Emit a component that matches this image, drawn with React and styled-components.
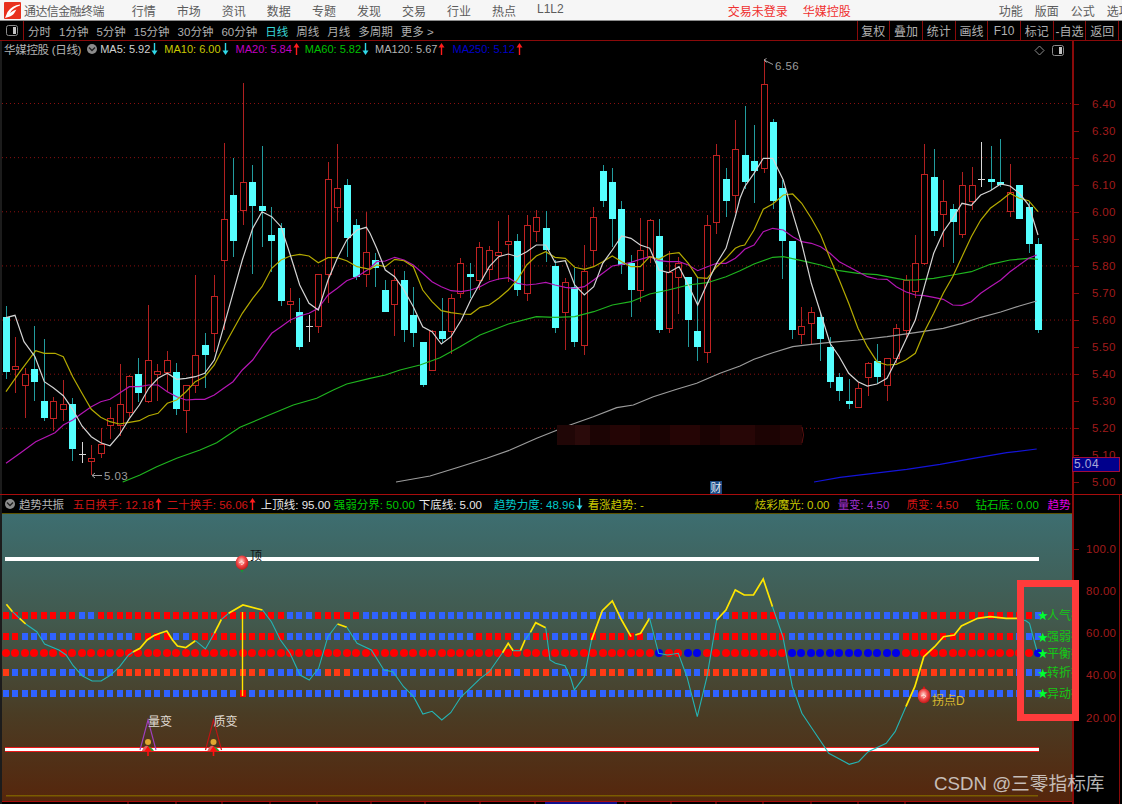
import React from "react";
import styled, { createGlobalStyle } from "styled-components";

const GlobalStyle = createGlobalStyle`
  html, body {
    margin: 0;
    padding: 0;
    background: #000;
  }
  body {
    font-family: "Liberation Sans", "Noto Sans CJK SC", sans-serif;
  }
`;

// ---- chart data, read off the reference (z = crop coordinates) ----
const upY = (z) => 130 + z / 3;
const candleX = (i) => Math.round(5.9 + 9.47 * i);

// [high, top, bottom, low, type] c = falling, r = rising, w = doji
const CANDLES = [
  [528, 562, 725, 748, "c"], [622, 708, 718, 790, "r"], [715, 732, 767, 863, "r"], [588, 717, 755, 812, "c"],
  [628, 813, 863, 872, "c"], [800, 813, 865, 903, "r"], [750, 822, 838, 872, "r"], [805, 822, 958, 992, "c"],
  [937, 973, 975, 1000, "w"], [945, 985, 993, 1035, "r"], [895, 942, 970, 985, "r"], [832, 865, 887, 928, "r"],
  [702, 822, 885, 918, "r"], [735, 740, 848, 862, "r"], [684, 731, 790, 815, "c"], [526, 692, 815, 818, "r"],
  [703, 725, 734, 812, "r"], [663, 692, 727, 785, "r"], [700, 725, 837, 855, "c"], [765, 765, 840, 910, "r"],
  [435, 675, 767, 790, "r"], [610, 644, 674, 773, "c"], [436, 498, 611, 665, "r"], [38, 269, 392, 600, "r"],
  [83, 195, 333, 382, "c"], [-141, 157, 240, 285, "r"], [105, 156, 229, 432, "c"], [48, 229, 244, 350, "c"],
  [230, 316, 333, 425, "c"], [278, 293, 514, 527, "c"], [475, 514, 524, 578, "r"], [505, 545, 652, 660, "c"],
  [555, 589, 590, 635, "w"], [433, 433, 590, 608, "r"], [95, 148, 433, 520, "r"], [43, 174, 232, 277, "r"],
  [148, 165, 325, 382, "c"], [268, 286, 440, 450, "c"], [245, 368, 434, 470, "r"], [368, 390, 415, 470, "c"],
  [450, 481, 545, 545, "c"], [418, 450, 524, 618, "r"], [423, 449, 601, 635, "c"], [470, 554, 610, 652, "c"],
  [635, 635, 765, 772, "c"], [600, 603, 720, 722, "r"], [505, 602, 627, 640, "c"], [492, 505, 603, 672, "r"],
  [385, 400, 490, 505, "r"], [400, 433, 441, 505, "c"], [337, 352, 451, 480, "r"], [348, 360, 418, 450, "r"],
  [272, 368, 377, 450, "r"], [255, 335, 344, 455, "r"], [312, 334, 480, 497, "c"], [255, 286, 490, 513, "r"],
  [240, 262, 304, 335, "r"], [244, 295, 360, 397, "c"], [390, 407, 593, 610, "c"], [445, 456, 548, 660, "r"],
  [415, 472, 635, 652, "c"], [345, 424, 646, 675, "r"], [232, 262, 361, 410, "r"], [105, 122, 212, 230, "c"],
  [113, 156, 268, 350, "c"], [212, 238, 405, 432, "c"], [375, 400, 480, 562, "c"], [263, 360, 482, 515, "r"],
  [268, 270, 380, 400, "r"], [268, 318, 601, 610, "c"], [362, 428, 595, 610, "r"], [380, 400, 443, 553, "r"],
  [440, 441, 570, 652, "c"], [440, 602, 651, 692, "c"], [255, 287, 668, 700, "r"], [43, 76, 278, 312, "r"],
  [114, 148, 212, 262, "c"], [-30, 58, 197, 250, "r"], [-72, 75, 155, 178, "c"], [-15, 92, 122, 220, "c"],
  [-213, -137, 116, 130, "r"], [-33, -24, 212, 237, "c"], [150, 173, 333, 448, "c"], [333, 333, 601, 627, "c"],
  [530, 588, 612, 643, "r"], [532, 546, 581, 643, "r"], [545, 562, 627, 692, "c"], [620, 652, 756, 773, "c"],
  [730, 740, 782, 812, "c"], [748, 814, 821, 838, "c"], [755, 775, 832, 835, "r"], [695, 700, 741, 797, "r"],
  [643, 692, 740, 760, "c"], [684, 684, 767, 812, "r"], [582, 594, 684, 700, "r"], [435, 450, 600, 625, "r"],
  [315, 400, 483, 505, "r"], [43, 132, 400, 405, "r"], [58, 140, 302, 318, "c"], [150, 214, 253, 350, "r"],
  [222, 238, 277, 398, "c"], [125, 166, 314, 325, "r"], [110, 166, 215, 240, "r"], [35, 147, 149, 172, "w"],
  [48, 148, 155, 180, "c"], [27, 157, 163, 172, "c"], [103, 187, 245, 260, "r"], [165, 165, 268, 268, "c"],
  [215, 230, 342, 368, "c"], [325, 343, 601, 610, "c"],
];

// moving averages, three crops of the upper pane
const crop = (x0, sx, y0) => (pts) => pts.map(([x, y]) => [x0 + x / sx, y0 + y / 3]);
const A = crop(0, 3, 130);
const B = crop(370, 3, 130);
const C = crop(740, 3, 130);

const MA_LINES = [
  {
    color: "#1fb41f",
    pts: [
      ...A([[368, 1056], [420, 1035], [470, 1010], [530, 985], [600, 960], [650, 938], [720, 892], [800, 858], [880, 825], [950, 805], [1000, 780], [1040, 762], [1110, 745]]),
      ...B([[46, 735], [90, 720], [150, 705], [210, 683], [270, 650], [330, 615], [415, 582], [499, 560], [555, 562], [614, 560], [671, 545], [727, 525], [783, 515], [839, 492], [895, 480], [955, 465], [1012, 458], [1068, 440], [1110, 422]]),
      ...C([[42, 402], [98, 382], [130, 380], [185, 392], [242, 405], [298, 422], [354, 430], [411, 434], [469, 445], [497, 450], [526, 450], [581, 445], [638, 435], [694, 425], [751, 403], [810, 390], [866, 385], [894, 388]]),
    ],
  },
  {
    color: "#9c9c9c",
    pts: [
      ...B([[78, 1056], [180, 1038], [270, 1010], [350, 985], [420, 960], [500, 925], [600, 885], [670, 860], [740, 833], [790, 825], [850, 800], [920, 778], [980, 760], [1050, 730], [1110, 708]]),
      ...C([[42, 688], [98, 668], [158, 650], [214, 643], [270, 637], [354, 630], [441, 620], [526, 608], [610, 595], [666, 580], [722, 562], [782, 546], [838, 528], [890, 513]]),
    ],
  },
  {
    color: "#1414d8",
    pts: C([[222, 1056], [300, 1042], [400, 1030], [500, 1018], [600, 1003], [700, 985], [800, 968], [890, 957]]),
  },
  {
    color: "#b416b4",
    pts: [
      ...A([[18, 1000], [60, 970], [107, 935], [165, 908], [190, 885], [218, 870], [246, 850], [274, 830], [302, 815], [330, 808], [358, 790], [388, 770], [418, 770], [446, 765], [474, 765], [502, 785], [530, 800], [558, 810], [586, 808], [614, 808], [643, 795], [671, 775], [699, 755], [727, 720], [758, 690], [786, 650], [815, 610], [843, 590], [871, 570], [899, 558], [927, 550], [955, 535], [984, 495], [1012, 475], [1040, 452], [1071, 440], [1110, 415]]),
      ...B([[20, 395], [46, 393], [74, 382], [102, 390], [130, 405], [158, 430], [186, 455], [214, 470], [243, 482], [274, 485], [302, 480], [330, 470], [358, 455], [386, 447], [415, 443], [442, 460], [470, 465], [499, 462], [527, 457], [555, 465], [586, 472], [614, 475], [643, 470], [671, 450], [698, 430], [727, 408], [755, 403], [783, 397], [811, 388], [839, 380], [867, 392], [895, 395], [927, 395], [955, 405], [983, 422], [1012, 410], [1040, 400], [1068, 400], [1096, 385], [1110, 372]]),
      ...C([[14, 358], [42, 345], [70, 305], [98, 295], [130, 300], [158, 320], [185, 335], [214, 340], [242, 350], [270, 370], [298, 395], [326, 410], [354, 425], [382, 440], [411, 447], [441, 448], [469, 470], [497, 485], [526, 495], [553, 497], [581, 502], [610, 508], [638, 525], [666, 526], [694, 515], [722, 490], [751, 470], [782, 450], [810, 425], [838, 405], [866, 385], [890, 375]]),
    ],
  },
  {
    color: "#b4aa00",
    pts: [
      ...A([[18, 785], [60, 725], [107, 662], [133, 670], [165, 670], [190, 680], [218, 740], [246, 790], [274, 838], [302, 862], [330, 875], [358, 882], [388, 877], [418, 872], [446, 857], [474, 850], [502, 820], [530, 810], [558, 785], [586, 755], [614, 740], [643, 705], [671, 650], [699, 600], [727, 550], [758, 505], [786, 470], [815, 415], [843, 390], [871, 378], [899, 373], [927, 378], [955, 398], [984, 383], [1012, 383], [1040, 392], [1071, 410], [1110, 418]]),
      ...B([[20, 405], [46, 410], [74, 388], [102, 392], [130, 410], [158, 480], [186, 515], [214, 542], [243, 548], [274, 552], [302, 553], [330, 532], [358, 525], [386, 505], [415, 480], [442, 450], [470, 405], [499, 378], [527, 365], [555, 382], [586, 385], [614, 412], [643, 418], [671, 410], [698, 395], [727, 378], [755, 395], [783, 410], [811, 410], [839, 380], [867, 388], [895, 372], [927, 368], [955, 400], [983, 443], [1012, 445], [1040, 410], [1068, 385], [1096, 355], [1110, 348]]),
      ...C([[14, 345], [42, 300], [70, 238], [98, 222], [130, 195], [158, 192], [185, 220], [214, 265], [242, 315], [270, 385], [298, 450], [326, 520], [354, 595], [382, 650], [411, 695], [441, 705], [469, 703], [497, 690], [526, 670], [553, 605], [581, 550], [610, 490], [638, 440], [666, 380], [694, 320], [722, 270], [751, 235], [782, 212], [810, 190], [838, 205], [866, 212], [894, 245]]),
    ],
  },
  {
    color: "#d4d4d4",
    pts: [
      ...A([[18, 563], [45, 556], [72, 635], [105, 680], [133, 755], [160, 773], [190, 797], [218, 838], [246, 888], [274, 920], [302, 938], [330, 947], [358, 915], [388, 866], [418, 825], [446, 775], [474, 745], [502, 730], [530, 748], [558, 745], [586, 740], [614, 730], [643, 690], [671, 590], [699, 490], [727, 390], [758, 295], [786, 245], [815, 260], [843, 290], [871, 375], [899, 465], [927, 520], [955, 540], [984, 450], [1012, 385], [1040, 330], [1071, 300], [1099, 292], [1110, 310]]),
      ...B([[20, 355], [46, 420], [74, 440], [102, 480], [130, 530], [158, 590], [186, 605], [214, 642], [243, 620], [274, 570], [302, 510], [330, 460], [358, 410], [386, 380], [415, 372], [442, 380], [470, 365], [499, 345], [527, 345], [555, 397], [586, 392], [614, 465], [643, 495], [671, 470], [698, 400], [727, 360], [755, 318], [783, 325], [811, 345], [839, 355], [867, 420], [895, 428], [927, 410], [955, 465], [983, 525], [1012, 460], [1040, 400], [1068, 355], [1096, 260], [1110, 205]]),
      ...C([[14, 170], [42, 130], [70, 85], [98, 85], [130, 150], [158, 250], [185, 340], [214, 460], [242, 550], [270, 640], [298, 680], [326, 730], [354, 755], [382, 768], [411, 762], [441, 745], [469, 690], [497, 630], [526, 570], [553, 470], [581, 370], [610, 305], [638, 265], [666, 220], [694, 226], [722, 195], [751, 182], [782, 162], [810, 168], [838, 190], [866, 225], [894, 315]]),
    ],
  },
];

const GRID_PRICES = [6.4, 6.2, 6.0, 5.8, 5.6, 5.4, 5.2];
const PRICE_LABELS = [6.4, 6.3, 6.2, 6.1, 6.0, 5.9, 5.8, 5.7, 5.6, 5.5, 5.4, 5.3, 5.2, 5.1, 5.0];
const priceY = (p) => 103.5 + (6.4 - p) * 270.7;

const MOSAIC = [
  [557, 18, "#200606"], [575, 15, "#2a0a0a"], [590, 20, "#1c0404"], [610, 30, "#240505"], [640, 30, "#1a0303"],
  [670, 30, "#250505"], [700, 20, "#1a0303"], [720, 35, "#270606"], [755, 25, "#1c0303"], [780, 22, "#220505"],
];

// lower pane: signal rows, runs of red as [from, to]
const inRuns = (i, runs) => runs.some(([a, b]) => i >= a && i <= b);
const ROWS = [
  { y: 612, on: "#ff0000", runs: [[0, 7], [10, 29], [33, 37], [77, 81], [97, 108]] },
  { y: 633, on: "#ff0000", runs: [[0, 1], [14, 17], [20, 29], [50, 53], [56, 57], [62, 67], [75, 82], [95, 106]] },
  { y: 669, on: "#ff3a14", runs: [[0, 0], [12, 27], [34, 36], [48, 53], [55, 57], [62, 65], [67, 68], [71, 71], [74, 80], [94, 106]] },
  { y: 690, on: "#ff0000", runs: [[25, 25]] },
];
const DOT_BLUE = [[69, 69], [72, 73], [83, 94], [109, 109]];

const Z6 = crop(0, 2.8, 490);
const Z7 = crop(560, 2.79, 490);
const TREND = [
  ["y", Z6([[18, 343], [35, 365]])],
  ["c", Z6([[35, 365], [55, 385]])],
  ["y", Z6([[55, 385], [72, 402]])],
  ["c", Z6([[72, 402], [103, 425], [125, 462], [165, 480], [185, 495], [205, 527], [230, 557], [258, 573], [283, 573], [310, 555], [335, 530], [360, 495], [372, 486]])],
  ["y", Z6([[372, 486], [392, 475], [412, 450], [430, 437], [448, 430], [467, 423], [483, 450], [497, 468], [520, 473], [547, 452]])],
  ["c", Z6([[547, 452], [575, 477], [600, 430]])],
  ["y", Z6([[600, 430], [620, 388]])],
  ["c", Z6([[620, 388], [640, 370]])],
  ["y", Z6([[640, 370], [680, 345], [735, 360]])],
  ["c", Z6([[735, 360], [760, 395], [785, 450], [812, 490], [840, 555], [866, 570], [892, 535], [918, 440], [945, 402]])],
  ["y", Z6([[945, 402], [971, 412]])],
  ["c", Z6([[971, 412], [1000, 460], [1040, 480], [1075, 540], [1100, 545], [1130, 590], [1158, 620], [1184, 672], [1210, 664], [1237, 690], [1262, 668], [1290, 622], [1345, 565], [1370, 545], [1407, 488]])],
  ["y", Z6([[1407, 488], [1423, 460], [1437, 482]])],
  ["c", Z6([[1437, 482], [1457, 482]])],
  ["y", Z6([[1457, 482], [1470, 450]])],
  ["c", Z6([[1470, 450], [1485, 427]])],
  ["y", Z6([[1485, 427], [1500, 398], [1528, 413]])],
  ["c", [...Z6([[1528, 413], [1540, 510], [1555, 520]]), ...Z7([[14, 527], [30, 565], [40, 600], [68, 560], [88, 450]])]],
  ["y", Z7([[88, 450], [118, 362], [146, 333], [172, 390], [198, 440]])],
  ["y", Z7([[210, 435], [225, 430], [250, 385]])],
  ["c", Z7([[250, 385], [275, 490], [300, 495], [330, 490], [354, 560], [383, 680], [410, 560], [437, 390]])],
  ["y", Z7([[437, 390], [463, 360], [489, 300], [514, 315], [540, 315], [567, 267], [593, 350]])],
  ["c", Z7([[593, 350], [622, 440], [648, 590], [675, 670], [700, 710], [750, 790], [807, 823], [833, 815], [860, 785], [910, 760], [935, 725], [965, 650]])],
  ["y", Z7([[965, 650], [990, 590], [1015, 500], [1045, 470], [1070, 440], [1100, 435], [1120, 408], [1165, 385], [1200, 380], [1245, 385], [1275, 385]])],
  ["c", Z7([[1275, 385], [1300, 392], [1310, 400], [1330, 480]])],
];

const SIDE_TAGS = [
  ["人气指", 615.3],
  ["强弱指", 636.7],
  ["平衡指", 653.3],
  ["转折指", 672.7],
  ["异动指", 693.3],
];

const BOTTOM_TICKS = [128, 176, 222, 270, 317, 371, 425, 480, 535, 625, 671, 716, 763, 811, 858, 905];

const LOWER_LABELS = [
  ["100.0", 548.7],
  ["80.00", 591],
  ["60.00", 633.3],
  ["40.00", 675.3],
  ["20.00", 717.7],
];

const NAV = ["行情", "市场", "资讯", "数据", "专题", "发现", "交易", "行业", "热点"];
const TABS = ["分时", "1分钟", "5分钟", "15分钟", "30分钟", "60分钟", "日线", "周线", "月线", "多周期"];
const TOOLS = ["复权", "叠加", "统计", "画线", "F10", "标记", "-自选", "返回"];

const MA_LEGEND = [
  { text: "MA5: 5.92", color: "#d0d0d0", dir: "down", ml: 0 },
  { text: "MA10: 6.00", color: "#c8c800", dir: "down", ml: 6 },
  { text: "MA20: 5.84", color: "#c000c0", dir: "up", ml: 7 },
  { text: "MA60: 5.82", color: "#00c000", dir: "down", ml: 5 },
  { text: "MA120: 5.67", color: "#b4b4b4", dir: "up", ml: 6 },
  { text: "MA250: 5.12", color: "#0000c8", dir: "up", ml: 7 },
];

const TREND_LEGEND = [
  { text: "五日换手: 12.18", color: "#d01414", dir: "up", ml: 9 },
  { text: "二十换手: 56.06", color: "#d01414", dir: "up", ml: 4.8 },
  { text: "上顶线: 95.00", color: "#e8e8e8", ml: 4.8 },
  { text: "强弱分界: 50.00", color: "#00c800", ml: 3.3 },
  { text: "下底线: 5.00", color: "#e8e8e8", ml: 3.8 },
  { text: "趋势力度: 48.96", color: "#00c8c8", dir: "down", ml: 11.7 },
  { text: "看涨趋势: -", color: "#c8c800", ml: 4.8 },
  { text: "炫彩魔光: 0.00", color: "#c8c800", ml: 110.8 },
  { text: "量变: 4.50", color: "#a030d0", ml: 8.2 },
  { text: "质变: 4.50", color: "#d01414", ml: 17.2 },
  { text: "钻石底: 0.00", color: "#00c800", ml: 17.2 },
  { text: "趋势", color: "#e000e0", ml: 8.7 },
];

// ---- page structure ----
const Page = styled.div`
  position: relative;
  width: 1122px;
  height: 804px;
  overflow: hidden;
  background: #000;
  font-family: "Liberation Sans", "Noto Sans CJK SC", sans-serif;
`;

const MenuBar = styled.header`
  display: flex;
  align-items: center;
  height: 20px;
  padding-left: 4px;
  background: #f6f6f6;
  border-bottom: 1px solid #8c8c8c;
  font-size: 12px;
  color: #5c5c5c;
  white-space: nowrap;
  overflow: hidden;
`;

const LogoMark = styled.svg`
  flex: none;
`;

const AppTitle = styled.span`
  flex: none;
  margin-left: 3px;
  letter-spacing: -0.6px;
`;

const NavGroup = styled.nav`
  display: flex;
  flex: none;
  gap: 21px;
  margin-left: 28px;
`;

const AlertGroup = styled.div`
  display: flex;
  flex: none;
  gap: 15px;
  margin-left: 164px;
  color: #f03030;
`;

const RightMenu = styled.div`
  display: flex;
  flex: none;
  gap: 12px;
  margin-left: 148px;
`;

const Toolbar = styled.div`
  display: flex;
  align-items: stretch;
  height: 19px;
  border-bottom: 1px solid #8a0a0a;
  font-size: 12px;
  color: #b0b0b0;
  white-space: nowrap;
`;

const PanelToggle = styled.div`
  display: flex;
  align-items: center;
  justify-content: center;
  width: 23px;
  border-right: 1px solid #8a0a0a;
`;

const TabList = styled.div`
  display: flex;
  align-items: center;
  gap: 8px;
  margin-left: 4px;
  font-size: 11.5px;
`;

const Tab = styled.span`
  color: ${(p) => (p.$active ? "#38d8d8" : "#b0b0b0")};
`;

const ToolList = styled.div`
  display: flex;
  margin-left: auto;
  margin-right: 3px;
  border-right: 1px solid #8a0a0a;
`;

const ToolButton = styled.span`
  display: flex;
  align-items: center;
  justify-content: center;
  width: 31.7px;
  border-left: 1px solid #8a0a0a;
`;

const ChartRow = styled.section`
  display: flex;
  height: ${(p) => p.$height}px;
  border-top: ${(p) => (p.$topLine ? "1px solid #a80c0c" : "none")};
  box-sizing: content-box;
`;

const PlotColumn = styled.div`
  position: relative;
  display: flex;
  flex-direction: column;
  width: 1070px;
  border-left: 2px solid #1c1c1c;
  overflow: hidden;
`;

const LegendRow = styled.div`
  display: flex;
  align-items: center;
  flex: none;
  height: ${(p) => p.$height}px;
  padding-left: ${(p) => p.$pad}px;
  font-size: ${(p) => p.$size}px;
  white-space: nowrap;
  ${(p) => p.$underline && "border-bottom: 1px solid #5c5200;"}
`;

const PaneTitle = styled.span`
  color: #b4b4b4;
  font-size: 11.5px;
  letter-spacing: -0.3px;
`;

const LegendItem = styled.span`
  display: inline-flex;
  align-items: center;
  flex: none;
  gap: 1px;
  margin-left: ${(p) => p.$ml}px;
  color: ${(p) => p.$color};
`;

const CollapseDot = styled.span`
  display: inline-flex;
  align-items: center;
  justify-content: center;
  flex: none;
  width: 10px;
  height: 10px;
  margin: 0 ${(p) => p.$after}px 0 ${(p) => p.$before}px;
  border-radius: 50%;
  background: #8c8c8c;
`;

const CornerSlot = styled.div`
  position: absolute;
  right: 2px;
  top: 4px;
  line-height: 0;
`;

const PlotSvg = styled.svg`
  display: block;
  flex: none;
`;

const LowerSvg = styled(PlotSvg)`
  background: linear-gradient(
    180deg,
    #3d6e70 0,
    #42584c 110px,
    #4a3c24 200px,
    #56260c 287px,
    #000 287px
  );
`;

const PriceAxis = styled.div`
  position: relative;
  flex: none;
  width: ${(p) => (p.$closed ? 45 : 48)}px;
  border-left: 2px solid #8a0a0a;
  ${(p) => p.$closed && "border-right: 1px solid #8a0a0a;"}
  color: #a01c1c;
  font-size: 11.5px;
`;

const AxisLabel = styled.span`
  position: absolute;
  left: ${(p) => p.$left}px;
  transform: translateY(-50%);
  line-height: 14px;
  letter-spacing: 0.3px;
`;

const AxisTick = styled.i`
  position: absolute;
  left: 0;
  width: 5px;
  height: 1px;
  background: #8a0a0a;
`;

const LastPrice = styled.span`
  position: absolute;
  left: -2px;
  top: 416px;
  width: 45px;
  height: 13px;
  padding-left: 1px;
  background: #00008c;
  border: 1px solid #a00c3c;
  box-sizing: content-box;
  color: #a8a8d8;
  font-size: 12px;
  line-height: 13px;
  letter-spacing: 0.4px;
`;

const AnnotationBox = styled.div`
  position: absolute;
  left: 1017px;
  top: 580px;
  width: 62px;
  height: 141px;
  box-sizing: border-box;
  border: 7px solid #ff3b3b;
`;

const Watermark = styled.div`
  position: absolute;
  left: 934px;
  top: 772px;
  font-size: 18.7px;
  line-height: 24px;
  color: rgba(232, 232, 232, 0.78);
  white-space: nowrap;
`;

const DIR_COLOR = { up: "#ff1c1c", down: "#30d8e8" };

const Arrow = ({ dir }) => (
  <svg width="7" height="12" viewBox="0 0 7 12">
    <path d={dir === "up" ? "M3.5 3v9" : "M3.5 0v9"} stroke={DIR_COLOR[dir]} strokeWidth="1.4" />
    <path d={dir === "up" ? "M3.5 0 6.5 4.5h-6z" : "M3.5 12 .5 7.5h6z"} fill={DIR_COLOR[dir]} />
  </svg>
);

const Chevron = () => (
  <svg width="8" height="6" viewBox="0 0 8 6">
    <path d="M1 1.5 4 4.5 7 1.5" fill="none" stroke="#222" strokeWidth="1.4" />
  </svg>
);

const ToggleIcon = () => (
  <svg width="12" height="11" viewBox="0 0 12 11">
    <rect x=".5" y=".5" width="11" height="10" rx="2" fill="none" stroke="#8c8c8c" />
    <rect x="7" y="2" width="3" height="7" fill="#c4c4c4" />
  </svg>
);

const Logo = () => (
  <LogoMark width="17" height="17" viewBox="0 0 17 17">
    <rect width="17" height="17" rx="1" fill="#e8301c" />
    <path
      d="M16 2.5C11 3 6.5 5.5 3.5 10L1 16l5-1.5C10 13 11 9.5 12.5 7.5 9.5 8.5 8 9.5 6 11c1.5-3.5 5.5-6 10-7.5z"
      fill="#fff"
    />
  </LogoMark>
);

const toPoints = (pts) => pts.map(([x, y]) => `${x.toFixed(1)},${y.toFixed(1)}`).join(" ");

const Candle = ({ data, index }) => {
  const [hi, top, bottom, lo, type] = data;
  const x = candleX(index);
  const y0 = upY(top);
  const y1 = upY(bottom);
  const wick = type === "c" ? "#229c9e" : type === "r" ? "#b02020" : "#d8d8d8";
  return (
    <g shapeRendering="crispEdges">
      <line x1={x + 0.5} x2={x + 0.5} y1={upY(hi)} y2={upY(lo)} stroke={wick} />
      {type === "c" && <rect x={x - 3} y={y0} width={7} height={Math.max(y1 - y0, 3)} fill="#55ffff" />}
      {type === "r" && (
        <rect x={x - 2.5} y={y0} width={6} height={Math.max(y1 - y0, 2)} fill="#000" stroke="#c02222" />
      )}
      {type === "w" && <rect x={x - 3} y={y0} width={7} height={1} fill="#d8d8d8" />}
    </g>
  );
};

const UpperPlot = () => (
  <PlotSvg width="1070" height="437" viewBox="2 57 1070 437">
    {GRID_PRICES.map((p) => (
      <line key={p} x1="2" x2="1072" y1={priceY(p)} y2={priceY(p)} stroke="#8a1010" strokeDasharray="1 3" />
    ))}
    {CANDLES.map((c, i) => (
      <Candle key={i} data={c} index={i} />
    ))}
    {MA_LINES.map((m) => (
      <polyline key={m.color} points={toPoints(m.pts)} fill="none" stroke={m.color} strokeWidth="1.2" />
    ))}
    {/* mosaic over the hidden note */}
    {MOSAIC.map(([x, w, fill]) => (
      <rect key={x} x={x} y="425" width={w} height="20" fill={fill} />
    ))}
    <path d="M802 427q3 8 0 16" fill="none" stroke="#5c1010" />
    {/* high / low flags */}
    <path d="M773 64.5 764 60m0 0 2.5-1.5M764 60l2.5 2.5" fill="none" stroke="#a0a0a0" />
    <text x="775" y="69.5" fill="#9c9c9c" fontSize="11.5" letterSpacing=".4">6.56</text>
    <path d="M102 475.5H92m0 0 3-2.5m-3 2.5 3 2.5" fill="none" stroke="#a0a0a0" />
    <text x="104" y="480" fill="#9c9c9c" fontSize="11.5" letterSpacing=".4">5.03</text>
    {/* finance marker */}
    <rect x="710" y="481" width="12" height="13" fill="#1a4a84" />
    <text x="710.5" y="491.5" fill="#e0e8f0" fontSize="11">财</text>
  </PlotSvg>
);

const CornerIcons = () => (
  <svg width="36" height="12" viewBox="0 0 36 12">
    <path d="M5.5 1 10 5.5 5.5 10 1 5.5z" fill="none" stroke="#8c8c8c" />
    <rect x="18.5" y=".5" width="11" height="10" rx="2" fill="none" stroke="#8c8c8c" />
    <rect x="25" y="2" width="3" height="7" fill="#c4c4c4" />
  </svg>
);

const TurnMarker = ({ x, y, tip }) => (
  <g>
    {tip === "top" && <path d={`M${x - 3} ${y - 5}L${x} ${y - 10}L${x + 3} ${y - 5}z`} fill="#e01010" />}
    {tip === "bottom" && <path d={`M${x - 2} ${y + 6}L${x} ${y + 10}L${x + 2} ${y + 6}z`} fill="#10a030" />}
    <ellipse cx={x} cy={y} rx="6.3" ry="7.3" fill="url(#ball)" />
    <path d={`M${x - 3} ${y}q3 -2 5 0q-1 2 -3 2`} fill="none" stroke="#ffe8e0" strokeWidth=".8" />
  </g>
);

const ChangeFlag = ({ x, color, label }) => (
  <g>
    <path d={`M${x - 8} 750L${x} 720L${x + 8} 750`} fill="none" stroke={color} strokeWidth="1.1" />
    <circle cx={x} cy={742} r="3" fill="#e0a830" />
    <path d={`M${x - 6} 751q6 -9 12 0z`} fill="#30a030" />
    <path d={`M${x - 6} 751q2 -6 6 -5l0 5z`} fill="#e06060" />
    <path d={`M${x} 756V750`} stroke="#ff1010" strokeWidth="1.6" />
    <path d={`M${x - 3.5} 751L${x} 746L${x + 3.5} 751z`} fill="#ff1010" />
    <text x={x} y="725.5" fill="#e0dcd4" fontSize="12">{label}</text>
  </g>
);

const LowerPlot = () => (
  <LowerSvg width="1070" height="290" viewBox="2 514 1070 290">
    <defs>
      <radialGradient id="ball" cx="45%" cy="40%" r="60%">
        <stop offset="0" stopColor="#ffd8d0" />
        <stop offset="0.55" stopColor="#f04848" />
        <stop offset="1" stopColor="#c01818" />
      </radialGradient>
    </defs>

    <g shapeRendering="crispEdges">
      <rect x="5" y="557" width="1034" height="4" fill="#fff" />
      <rect x="5" y="747" width="1034" height="5" fill="#e81818" />
      <rect x="5" y="748" width="1034" height="3" fill="#fff" />
    </g>
    <line x1="6" x2="1038" y1="795.8" y2="795.8" stroke="#7a5c00" strokeWidth="1.5" />

    <g shapeRendering="crispEdges">
      {ROWS.map((row) =>
        CANDLES.map((_, i) => (
          <rect
            key={`${row.y}-${i}`}
            x={candleX(i) - 3}
            y={row.y}
            width="6"
            height="7"
            fill={inRuns(i, row.runs) ? row.on : "#2f62ff"}
          />
        ))
      )}
    </g>
    {CANDLES.map((_, i) => (
      <circle key={i} cx={candleX(i)} cy="653" r="4" fill={inRuns(i, DOT_BLUE) ? "#0000e8" : "#ff0000"} />
    ))}

    <line x1="242.5" x2="242.5" y1="612" y2="696" stroke="#ffe600" strokeWidth="1.4" />

    {TREND.map(([kind, pts], i) => (
      <polyline
        key={i}
        points={toPoints(pts)}
        fill="none"
        stroke={kind === "y" ? "#ffe600" : "#24b4b4"}
        strokeWidth={kind === "y" ? 1.7 : 1.1}
      />
    ))}

    <TurnMarker x={242} y={562.7} tip="bottom" />
    <text x="250" y="560" fill="#141414" fontSize="12">顶</text>
    <TurnMarker x={924} y={696} tip="top" />
    <text x="932" y="705" fill="#d8b830" fontSize="12">拐点D</text>

    <ChangeFlag x={148} color="#a040c0" label="量变" />
    <ChangeFlag x={213.5} color="#c01414" label="质变" />

    {SIDE_TAGS.map(([label, y]) => (
      <g key={label}>
        <text x="1037.5" y={y + 4} fill="#00ff30" fontSize="10.5">★</text>
        <text x="1047" y={y + 4.5} fill="#14c814" fontSize="12">{label}</text>
      </g>
    ))}

    <line x1="2" x2="1072" y1="801.5" y2="801.5" stroke="#a80c0c" />
    {BOTTOM_TICKS.map((x) => (
      <line key={x} x1={x} x2={x} y1="801" y2="804" stroke="#a80c0c" />
    ))}
    <rect x="545" y="802" width="72" height="2" fill="#10108c" />
  </LowerSvg>
);

export default function App() {
  return (
    <Page>
      <GlobalStyle />
      <MenuBar>
        <Logo />
        <AppTitle>通达信金融终端</AppTitle>
        <NavGroup>
          {NAV.map((item) => (
            <span key={item}>{item}</span>
          ))}
          <span>L1L2</span>
        </NavGroup>
        <AlertGroup>
          <span>交易未登录</span>
          <span>华媒控股</span>
        </AlertGroup>
        <RightMenu>
          <span>功能</span>
          <span>版面</span>
          <span>公式</span>
          <span>选项</span>
        </RightMenu>
      </MenuBar>

      <Toolbar>
        <PanelToggle>
          <ToggleIcon />
        </PanelToggle>
        <TabList>
          {TABS.map((tab) => (
            <Tab key={tab} $active={tab === "日线"}>
              {tab}
            </Tab>
          ))}
          <Tab>更多 &gt;</Tab>
        </TabList>
        <ToolList>
          {TOOLS.map((tool) => (
            <ToolButton key={tool}>{tool}</ToolButton>
          ))}
        </ToolList>
      </Toolbar>

      <ChartRow $height={453}>
        <PlotColumn>
          <LegendRow $height={16} $pad={2} $size={11}>
            <PaneTitle>华媒控股 (日线)</PaneTitle>
            <CollapseDot $before={6} $after={3}>
              <Chevron />
            </CollapseDot>
            {MA_LEGEND.map((m) => (
              <LegendItem key={m.text} $ml={m.ml} $color={m.color}>
                {m.text}
                <Arrow dir={m.dir} />
              </LegendItem>
            ))}
          </LegendRow>
          <CornerSlot>
            <CornerIcons />
          </CornerSlot>
          <UpperPlot />
        </PlotColumn>
        <PriceAxis>
          {PRICE_LABELS.map((p) => (
            <React.Fragment key={p}>
              <AxisTick style={{ top: priceY(p) - 41 }} />
              <AxisLabel $left={18} style={{ top: priceY(p) - 41 }}>
                {p.toFixed(2)}
              </AxisLabel>
            </React.Fragment>
          ))}
          <LastPrice>5.04</LastPrice>
        </PriceAxis>
      </ChartRow>

      <ChartRow $height={309} $topLine>
        <PlotColumn>
          <LegendRow $height={18} $pad={2} $size={11.5} $underline>
            <CollapseDot $before={1} $after={4}>
              <Chevron />
            </CollapseDot>
            <PaneTitle>趋势共振</PaneTitle>
            {TREND_LEGEND.map((m) => (
              <LegendItem key={m.text} $ml={m.ml} $color={m.color}>
                {m.text}
                {m.dir && <Arrow dir={m.dir} />}
              </LegendItem>
            ))}
          </LegendRow>
          <LowerPlot />
        </PlotColumn>
        <PriceAxis $closed>
          {LOWER_LABELS.map(([label, y]) => (
            <React.Fragment key={label}>
              <AxisTick style={{ top: y - 495 }} />
              <AxisLabel $left={12} style={{ top: y - 495 }}>
                {label}
              </AxisLabel>
            </React.Fragment>
          ))}
        </PriceAxis>
      </ChartRow>

      <AnnotationBox />
      <Watermark>CSDN @三零指标库</Watermark>
    </Page>
  );
}
